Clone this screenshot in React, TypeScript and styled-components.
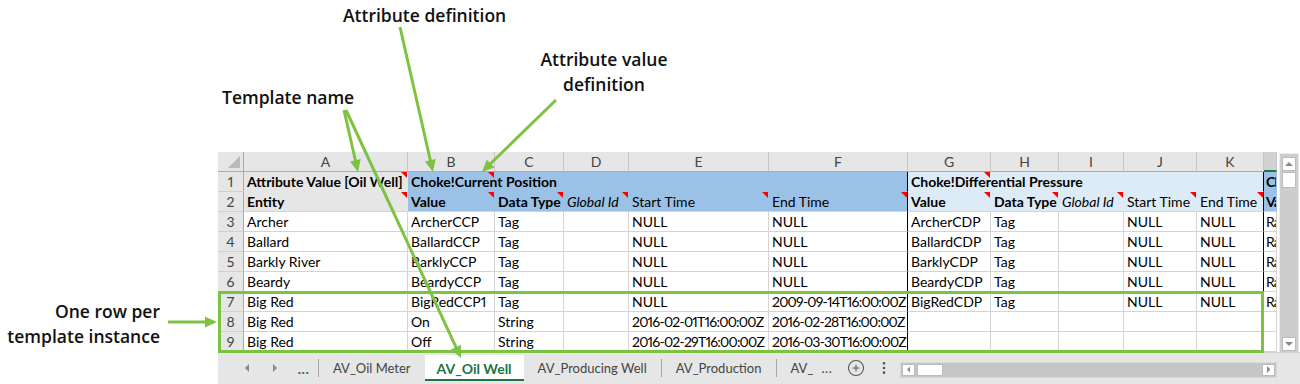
import React from "react";
import styled, { createGlobalStyle, css } from "styled-components";
import { CirclePlus, EllipsisVertical } from "lucide-react";

const GlobalStyle = createGlobalStyle`
  html, body { margin: 0; padding: 0; background: #fff; }
  body { font-family: "Lato", "Liberation Sans", sans-serif; }
`;

const GREEN = "#7dc243";
const XL_GREEN = "#217346";

type Fill = "gray" | "blue" | "pale";
const fills: Record<Fill, string> = { gray: "#e7e6e6", blue: "#9bc2e6", pale: "#ddebf7" };

const Page = styled.div`
  position: relative;
  width: 1300px;
  height: 384px;
  overflow: hidden;
  background: #fff;
`;

const Workbook = styled.div`
  display: flex;
  flex-direction: column;
  padding: 152px 0 0 218px;
`;

const SheetArea = styled.div`
  display: flex;
  height: 200px;
`;

const Grid = styled.div`
  display: grid;
  grid-template-columns: 26px 164px 87px 69px 65px 140px 139px 83px 68px 65px 73px 67px 13px;
  grid-auto-rows: 20px;
  width: 1059px;
  font-family: "Lato", "Liberation Sans", sans-serif;
  font-size: 14px;
  font-variant-numeric: proportional-nums;
  color: #000;
`;

const Corner = styled.div`
  box-sizing: border-box;
  position: relative;
  background: #e6e6e6;
  border-right: 1px solid #ababab;
  border-bottom: 1px solid #ababab;
  &::after {
    content: "";
    position: absolute;
    right: 3px;
    bottom: 3px;
    border-left: 12px solid transparent;
    border-bottom: 12px solid #b9b9b9;
  }
`;

const ColHead = styled.div<{ $active?: boolean }>`
  box-sizing: border-box;
  display: flex;
  align-items: center;
  justify-content: center;
  overflow: hidden;
  background: ${(p) => (p.$active ? "#d2d2d2" : "#e6e6e6")};
  border-right: 1px solid #c6c6c6;
  border-bottom: ${(p) => (p.$active ? `2px solid ${XL_GREEN}` : "1px solid #ababab")};
  color: #444;
  font-size: 14px;
`;

const RowHead = styled.div`
  box-sizing: border-box;
  display: flex;
  align-items: center;
  justify-content: center;
  background: #e6e6e6;
  border-right: 1px solid #ababab;
  border-bottom: 1px solid #d0d0d0;
  color: #444;
  font-size: 14px;
`;

const Cell = styled.div<{
  $fill?: Fill;
  $bold?: boolean;
  $italic?: boolean;
  $note?: boolean;
  $rule?: boolean;
  $over?: boolean;
  $closed?: boolean;
  $stamp?: boolean;
  $edge?: boolean;
}>`
  box-sizing: border-box;
  display: flex;
  align-items: center;
  padding: 0 2px 0 ${(p) => (p.$edge ? 2 : 3)}px;
  white-space: nowrap;
  overflow: ${(p) => (p.$over ? "visible" : "hidden")};
  background: ${(p) => (p.$fill ? fills[p.$fill] : "#fff")};
  border-right: 1px solid
    ${(p) => (p.$rule ? "#000" : p.$fill ? fills[p.$fill] : "#d4d4d4")};
  border-bottom: 1px solid
    ${(p) => (p.$fill && !p.$closed ? fills[p.$fill] : "#d4d4d4")};
  font-weight: ${(p) => (p.$bold ? 700 : 400)};
  font-style: ${(p) => (p.$italic ? "italic" : "normal")};
  letter-spacing: ${(p) => (p.$stamp ? "-0.78px" : p.$edge ? "-0.8px" : "normal")};
  ${(p) =>
    (p.$note || p.$over) &&
    css`
      position: relative;
    `}
  ${(p) =>
    p.$over &&
    css`
      z-index: 1;
    `}
  ${(p) =>
    p.$note &&
    css`
      &::after {
        content: "";
        position: absolute;
        top: 0;
        right: 0;
        border-left: 6px solid transparent;
        border-top: 6px solid #f00;
      }
    `}
`;

const VScroll = styled.div`
  box-sizing: border-box;
  display: flex;
  flex-direction: column;
  justify-content: space-between;
  width: 20px;
  margin: 1px 0 0 2px;
  height: 202px;
  padding: 3px 2px;
  background: #cdcdcd;
  border: 1px solid #ececec;
`;

const ScrollBtn = styled.div<{ $w?: number; $h?: number }>`
  box-sizing: border-box;
  display: flex;
  align-items: center;
  justify-content: center;
  width: ${(p) => p.$w ?? 14}px;
  height: ${(p) => p.$h ?? 14}px;
  background: #fff;
  border: 1px solid #bcbcbc;
`;

const VTrack = styled.div`
  display: flex;
  flex-direction: column;
  gap: 1px;
`;

const TabBar = styled.div`
  box-sizing: border-box;
  display: flex;
  align-items: stretch;
  height: 32px;
  padding: 2px 0 3px 15px;
  background: #e6e6e6;
  border-top: 1px solid #d0d0d0;
  font-family: "Lato", "Liberation Sans", sans-serif;
  font-size: 13px;
  color: #444;
`;

const NavBtn = styled.div`
  display: flex;
  align-items: center;
  justify-content: center;
  width: 28px;
`;

const More = styled.div`
  display: flex;
  align-items: center;
  justify-content: center;
  width: 29px;
  color: ${XL_GREEN};
  font-weight: 700;
  font-size: 14px;
  letter-spacing: 0.5px;
`;

const Sep = styled.div`
  align-self: center;
  width: 1px;
  height: 18px;
  background: #a6a6a6;
`;

const Tab = styled.div<{ $active?: boolean; $clip?: number }>`
  box-sizing: border-box;
  display: flex;
  align-items: center;
  padding: 0 14px;
  white-space: nowrap;
  ${(p) =>
    p.$clip &&
    css`
      width: ${p.$clip}px;
      overflow: hidden;
      padding-right: 0;
    `}
  ${(p) =>
    p.$active &&
    css`
      padding: 2px 12px 0;
      background: #fff;
      color: ${XL_GREEN};
      font-weight: 700;
      font-size: 14px;
      border-bottom: 2px solid ${XL_GREEN};
    `}
`;

const TabMore = styled.div`
  display: flex;
  align-items: center;
  padding: 0 8px 0 9px;
  color: #444;
  letter-spacing: 0.5px;
`;

const IconSlot = styled.div<{ $w: number }>`
  display: flex;
  align-items: center;
  justify-content: center;
  width: ${(p) => p.$w}px;
  color: #555;
`;

const HScroll = styled.div`
  box-sizing: border-box;
  align-self: center;
  display: flex;
  justify-content: space-between;
  width: 377px;
  height: 16px;
  margin: 3px 0 0 4px;
  padding: 1px;
  background: #c6c6c6;
  border: 1px solid #d8d8d8;
`;

const HTrack = styled.div`
  display: flex;
  gap: 2px;
`;

const Overlay = styled.svg`
  position: absolute;
  left: 0;
  top: 0;
  pointer-events: none;
`;

const Callout = styled.div<{ $left: number; $top: number; $align?: "left" | "center" | "right" }>`
  position: absolute;
  left: ${(p) => p.$left}px;
  top: ${(p) => p.$top}px;
  transform: ${(p) =>
    p.$align === "center" ? "translateX(-50%)" : p.$align === "right" ? "translateX(-100%)" : "none"};
  text-align: ${(p) => p.$align ?? "left"};
  font-family: "Open Sans", "Noto Sans", sans-serif;
  font-weight: 600;
  font-size: 17.5px;
  line-height: 25px;
  color: #111;
  white-space: nowrap;
`;

function Tri({ dir, size = 4, color = "#777" }: { dir: "up" | "down" | "left" | "right"; size?: number; color?: string }) {
  const s = size;
  const pts =
    dir === "up"
      ? `0,${s} ${s},0 ${2 * s},${s}`
      : dir === "down"
      ? `0,0 ${2 * s},0 ${s},${s}`
      : dir === "left"
      ? `${s},0 ${s},${2 * s} 0,${s}`
      : `0,0 0,${2 * s} ${s},${s}`;
  const w = dir === "up" || dir === "down" ? 2 * s : s;
  const h = dir === "up" || dir === "down" ? s : 2 * s;
  return (
    <svg width={w} height={h} viewBox={`0 0 ${w} ${h}`}>
      <polygon points={pts} fill={color} />
    </svg>
  );
}

function Arrow({ x1, y1, x2, y2 }: { x1: number; y1: number; x2: number; y2: number }) {
  const dx = x2 - x1;
  const dy = y2 - y1;
  const len = Math.hypot(dx, dy);
  const ux = dx / len;
  const uy = dy / len;
  const hl = 12;
  const hw = 5.5;
  const bx = x2 - ux * hl;
  const by = y2 - uy * hl;
  const px = -uy;
  const py = ux;
  const pts = `${x2},${y2} ${bx + px * hw},${by + py * hw} ${bx - px * hw},${by - py * hw}`;
  return (
    <g>
      <line x1={x1} y1={y1} x2={bx + ux * 2} y2={by + uy * 2} stroke={GREEN} strokeWidth={3} />
      <polygon points={pts} fill={GREEN} />
    </g>
  );
}

const letters = ["A", "B", "C", "D", "E", "F", "G", "H", "I", "J", "K", ""];

const dataRows: string[][] = [
  ["Archer", "ArcherCCP", "Tag", "", "NULL", "NULL", "ArcherCDP", "Tag", "", "NULL", "NULL", "Ra"],
  ["Ballard", "BallardCCP", "Tag", "", "NULL", "NULL", "BallardCDP", "Tag", "", "NULL", "NULL", "Ra"],
  ["Barkly River", "BarklyCCP", "Tag", "", "NULL", "NULL", "BarklyCDP", "Tag", "", "NULL", "NULL", "Ra"],
  ["Beardy", "BeardyCCP", "Tag", "", "NULL", "NULL", "BeardyCDP", "Tag", "", "NULL", "NULL", "Ra"],
  ["Big Red", "BigRedCCP1", "Tag", "", "NULL", "2009-09-14T16:00:00Z", "BigRedCDP", "Tag", "", "NULL", "NULL", "Ra"],
  ["Big Red", "On", "String", "", "2016-02-01T16:00:00Z", "2016-02-28T16:00:00Z", "", "", "", "", "", ""],
  ["Big Red", "Off", "String", "", "2016-02-29T16:00:00Z", "2016-03-30T16:00:00Z", "", "", "", "", "", ""],
];

const isStamp = (v: string) => /^\d{4}-\d{2}-\d{2}T/.test(v);

export default function App() {
  return (
    <Page>
      <GlobalStyle />
      <Workbook>
        <SheetArea>
          <Grid>
            <Corner />
            {letters.map((l, i) => (
              <ColHead key={i} $active={i === 11}>
                {l}
              </ColHead>
            ))}

            <RowHead>1</RowHead>
            <Cell $fill="gray" $bold $note>
              Attribute Value [Oil Well]
            </Cell>
            <Cell $fill="blue" $bold $note $over>
              Choke!Current Position
            </Cell>
            <Cell $fill="blue" />
            <Cell $fill="blue" />
            <Cell $fill="blue" />
            <Cell $fill="blue" $rule />
            <Cell $fill="pale" $bold $note $over>
              Choke!Differential Pressure
            </Cell>
            <Cell $fill="pale" />
            <Cell $fill="pale" />
            <Cell $fill="pale" />
            <Cell $fill="pale" $rule />
            <Cell $fill="blue" $bold $edge>
              Ch
            </Cell>

            <RowHead>2</RowHead>
            <Cell $fill="gray" $bold $note $closed>
              Entity
            </Cell>
            <Cell $fill="blue" $bold $note $closed>
              Value
            </Cell>
            <Cell $fill="blue" $bold $note $closed>
              Data Type
            </Cell>
            <Cell $fill="blue" $italic $note $closed>
              Global Id
            </Cell>
            <Cell $fill="blue" $note $closed>
              Start Time
            </Cell>
            <Cell $fill="blue" $note $closed $rule>
              End Time
            </Cell>
            <Cell $fill="pale" $bold $note $closed>
              Value
            </Cell>
            <Cell $fill="pale" $bold $note $closed>
              Data Type
            </Cell>
            <Cell $fill="pale" $italic $note $closed>
              Global Id
            </Cell>
            <Cell $fill="pale" $note $closed>
              Start Time
            </Cell>
            <Cell $fill="pale" $note $closed $rule>
              End Time
            </Cell>
            <Cell $fill="blue" $bold $closed $edge>
              Va
            </Cell>

            {dataRows.map((row, r) => (
              <React.Fragment key={r}>
                <RowHead>{r + 3}</RowHead>
                {row.map((v, c) => (
                  <Cell key={c} $rule={c === 5 || c === 10} $stamp={isStamp(v)} $edge={c === 11}>
                    {v}
                  </Cell>
                ))}
              </React.Fragment>
            ))}
          </Grid>
          <VScroll>
            <VTrack>
              <ScrollBtn>
                <Tri dir="up" size={4} color="#8a8a8a" />
              </ScrollBtn>
              <ScrollBtn $h={16} />
            </VTrack>
            <ScrollBtn>
              <Tri dir="down" size={4} color="#8a8a8a" />
            </ScrollBtn>
          </VScroll>
        </SheetArea>

        <TabBar>
          <NavBtn>
            <Tri dir="left" size={4} color="#888" />
          </NavBtn>
          <NavBtn>
            <Tri dir="right" size={4} color="#888" />
          </NavBtn>
          <More>...</More>
          <Sep />
          <Tab>AV_Oil Meter</Tab>
          <Tab $active>AV_Oil Well</Tab>
          <Tab>AV_Producing Well</Tab>
          <Sep />
          <Tab>AV_Production</Tab>
          <Sep />
          <Tab $clip={36}>AV_Pump</Tab>
          <TabMore>...</TabMore>
          <IconSlot $w={32}>
            <CirclePlus size={18} strokeWidth={1.4} />
          </IconSlot>
          <IconSlot $w={24}>
            <EllipsisVertical size={16} strokeWidth={2} />
          </IconSlot>
          <HScroll>
            <HTrack>
              <ScrollBtn $w={13} $h={12}>
                <Tri dir="left" size={3.5} color="#8a8a8a" />
              </ScrollBtn>
              <ScrollBtn $w={26} $h={12} />
            </HTrack>
            <ScrollBtn $w={13} $h={12}>
              <Tri dir="right" size={3.5} color="#8a8a8a" />
            </ScrollBtn>
          </HScroll>
        </TabBar>
      </Workbook>

      <Overlay width={1300} height={384} viewBox="0 0 1300 384">
        <rect x={219.5} y={292.5} width={1043} height={59} fill="none" stroke={GREEN} strokeWidth={3} />
        <Arrow x1={400} y1={27} x2={433} y2={172} />
        <Arrow x1={556} y1={100} x2={482} y2={172} />
        <Arrow x1={344} y1={110} x2={358} y2={172} />
        <Arrow x1={346} y1={110} x2={461} y2={358} />
        <Arrow x1={168} y1={322} x2={217} y2={322} />
      </Overlay>

      <Callout $left={343} $top={3}>
        Attribute definition
      </Callout>
      <Callout $left={604} $top={47} $align="center">
        Attribute value
        <br />
        definition
      </Callout>
      <Callout $left={222} $top={85}>
        Template name
      </Callout>
      <Callout $left={160} $top={299} $align="right">
        One row per
        <br />
        template instance
      </Callout>
    </Page>
  );
}
